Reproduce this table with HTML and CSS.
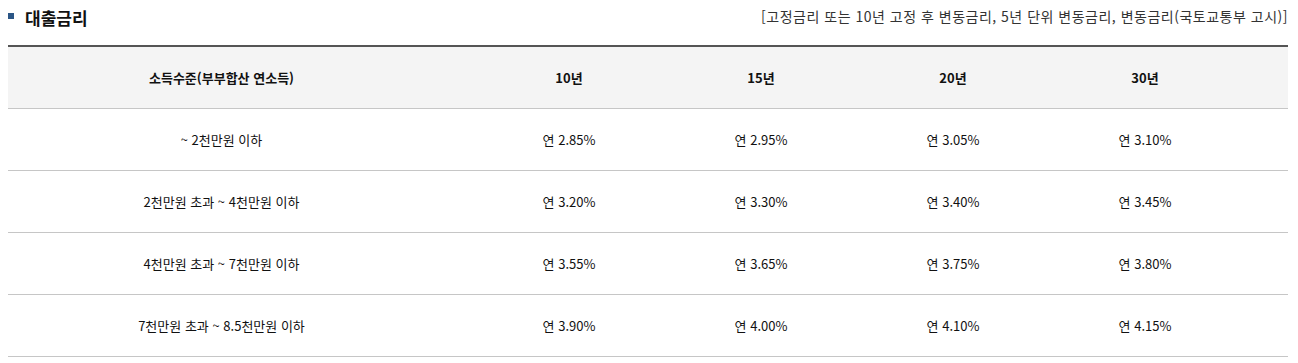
FILE: index.html
```html
<!DOCTYPE html>
<html lang="ko">
<head>
<meta charset="utf-8">
<title>대출금리</title>
<link rel="stylesheet" href="styles.css">
</head>
<body>
<section class="rate">
  <div class="rate-head">
    <h2 class="rate-title"><span class="bullet"></span>대출금리</h2>
    <p class="rate-note">[고정금리 또는 10년 고정 후 변동금리, 5년 단위 변동금리, 변동금리(국토교통부 고시)]</p>
  </div>
  <div class="table">
    <div class="row row-head">
      <div class="cell cell-first">소득수준(부부합산 연소득)</div>
      <div class="cell">10년</div>
      <div class="cell">15년</div>
      <div class="cell">20년</div>
      <div class="cell">30년</div>
    </div>
    <div class="row">
      <div class="cell cell-first">~ 2천만원 이하</div>
      <div class="cell">연 2.85%</div>
      <div class="cell">연 2.95%</div>
      <div class="cell">연 3.05%</div>
      <div class="cell">연 3.10%</div>
    </div>
    <div class="row">
      <div class="cell cell-first">2천만원 초과 ~ 4천만원 이하</div>
      <div class="cell">연 3.20%</div>
      <div class="cell">연 3.30%</div>
      <div class="cell">연 3.40%</div>
      <div class="cell">연 3.45%</div>
    </div>
    <div class="row">
      <div class="cell cell-first">4천만원 초과 ~ 7천만원 이하</div>
      <div class="cell">연 3.55%</div>
      <div class="cell">연 3.65%</div>
      <div class="cell">연 3.75%</div>
      <div class="cell">연 3.80%</div>
    </div>
    <div class="row">
      <div class="cell cell-first">7천만원 초과 ~ 8.5천만원 이하</div>
      <div class="cell">연 3.90%</div>
      <div class="cell">연 4.00%</div>
      <div class="cell">연 4.10%</div>
      <div class="cell">연 4.15%</div>
    </div>
  </div>
</section>
</body>
</html>
```

FILE: styles.css
```css
* { box-sizing: border-box; }

body {
  margin: 0;
  padding: 8px 10px 0 8px;
  background: #fff;
  font-family: "Noto Sans CJK KR", "Noto Sans", sans-serif;
  color: #111;
}

.rate-head {
  display: flex;
  justify-content: space-between;
  align-items: flex-start;
  height: 37px;
}

.rate-title {
  margin: 0;
  display: flex;
  align-items: center;
  gap: 11px;
  font-size: 17px;
  font-weight: 700;
  line-height: 20px;
  color: #111;
}

.bullet {
  display: block;
  width: 6px;
  height: 6px;
  background: #2b5686;
  margin-top: -4px;
}

.rate-note {
  margin: 0;
  font-size: 14px;
  line-height: 16px;
  color: #333;
  letter-spacing: 0.5px;
}

.table {
  border-top: 2px solid #555;
}

.row {
  display: grid;
  grid-template-columns: 465px repeat(4, 1fr);
  padding-right: 47px;
  height: 62px;
  border-bottom: 1px solid #c6c6c6;
  align-items: center;
  font-size: 13px;
  color: #111;
}

.row-head {
  background: #f4f4f4;
  font-weight: 700;
}

.cell {
  text-align: center;
  line-height: 18px;
}

.cell-first {
  padding-right: 38px;
}
```
